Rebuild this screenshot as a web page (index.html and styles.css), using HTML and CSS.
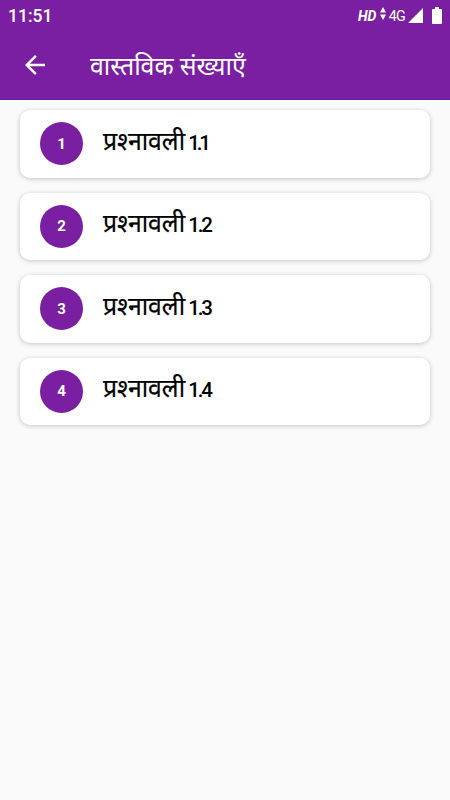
FILE: index.html
```html
<!DOCTYPE html>
<html lang="hi">
<head>
    <meta charset="UTF-8">
    <meta name="viewport" content="width=device-width, initial-scale=1.0">
    <title>वास्तविक संख्याएँ</title>
    <link rel="stylesheet" href="styles.css">
</head>
<body>
    <header class="header">
        <div class="status-bar">
            <span class="clock">11:51</span>
            <div class="status-icons">
                <span class="hd">HD</span>
                <svg class="data-arrows" width="6" height="14" viewBox="0 0 6 14">
                    <path d="M3 0l3 5.5H0zM3 13L0 7.5h6z" fill="#fff"/>
                </svg>
                <span class="network">4G</span>
                <svg class="signal" width="15" height="15" viewBox="0 0 15 15">
                    <path d="M15 0v15H0z" fill="#fff"/>
                </svg>
                <svg class="battery" width="10" height="17" viewBox="0 0 10 17">
                    <path d="M3 0h4v2h2a1 1 0 0 1 1 1v13a1 1 0 0 1-1 1H1a1 1 0 0 1-1-1V3a1 1 0 0 1 1-1h2z" fill="#fff"/>
                </svg>
            </div>
        </div>
        <div class="toolbar">
            <svg class="back" width="30" height="30" viewBox="0 0 24 24">
                <path d="M20 11H7.83l5.59-5.59L12 4l-8 8 8 8 1.41-1.41L7.83 13H20v-2z" fill="#fff"/>
            </svg>
            <h1 class="title">वास्तविक संख्याएँ</h1>
        </div>
    </header>

    <main class="list">
        <div class="card">
            <span class="number">1</span>
            <span class="name">प्रश्&zwj;नावली <span class="part narrow">1.1</span></span>
        </div>
        <div class="card">
            <span class="number">2</span>
            <span class="name">प्रश्&zwj;नावली <span class="part">1.2</span></span>
        </div>
        <div class="card">
            <span class="number">3</span>
            <span class="name">प्रश्&zwj;नावली <span class="part">1.3</span></span>
        </div>
        <div class="card">
            <span class="number">4</span>
            <span class="name">प्रश्&zwj;नावली <span class="part">1.4</span></span>
        </div>
    </main>
</body>
</html>
```
FILE: styles.css
```css
* {
    box-sizing: border-box;
}

body {
    margin: 0;
    min-height: 100vh;
    font-family: Roboto, "Noto Sans", sans-serif;
    background: #fafafa;
}

.header {
    height: 100px;
    border-bottom: 1px solid #6a1b9a;
    background: #7b1fa2;
    color: #fff;
}

.status-bar {
    display: flex;
    justify-content: space-between;
    align-items: center;
    height: 31px;
    padding: 0 8px;
}

.clock {
    font-size: 17.5px;
    font-weight: 500;
}

.status-icons {
    display: flex;
    align-items: center;
}

.hd {
    font-size: 14px;
    font-weight: 700;
    font-style: italic;
}

.data-arrows {
    margin: -3px 2px 0 4px;
}

.network {
    font-size: 15.5px;
    letter-spacing: -0.8px;
    transform: scaleX(0.92);
}

.signal {
    margin: 0 9px 0 2px;
}

.toolbar {
    display: flex;
    align-items: center;
    height: 67px;
    padding-left: 20px;
}

.title {
    margin: 0 0 0 40px;
    font-size: 24.9px;
    font-weight: 400;
}

.list {
    display: grid;
    gap: 15px;
    padding: 10px 20px;
}

.card {
    display: flex;
    align-items: center;
    height: 67.5px;
    padding-left: 20px;
    border-radius: 10px;
    background: #fff;
    box-shadow: 0 1px 5px rgba(0, 0, 0, 0.22);
}

.number {
    display: flex;
    align-items: center;
    justify-content: center;
    width: 43px;
    height: 43px;
    border-radius: 50%;
    background: #7b1fa2;
    color: #fff;
    font-size: 15px;
    font-weight: 700;
}

.name {
    margin: 0 0 8px 20px;
    font-size: 24.8px;
    font-weight: 400;
    word-spacing: -3px;
    color: #000;
    -webkit-text-stroke: 0.2px #000;
}

.part {
    font-size: 20.5px;
    font-weight: 500;
    letter-spacing: -2.2px;
    -webkit-text-stroke: 0;
}

.narrow {
    letter-spacing: -3.2px;
}
```
